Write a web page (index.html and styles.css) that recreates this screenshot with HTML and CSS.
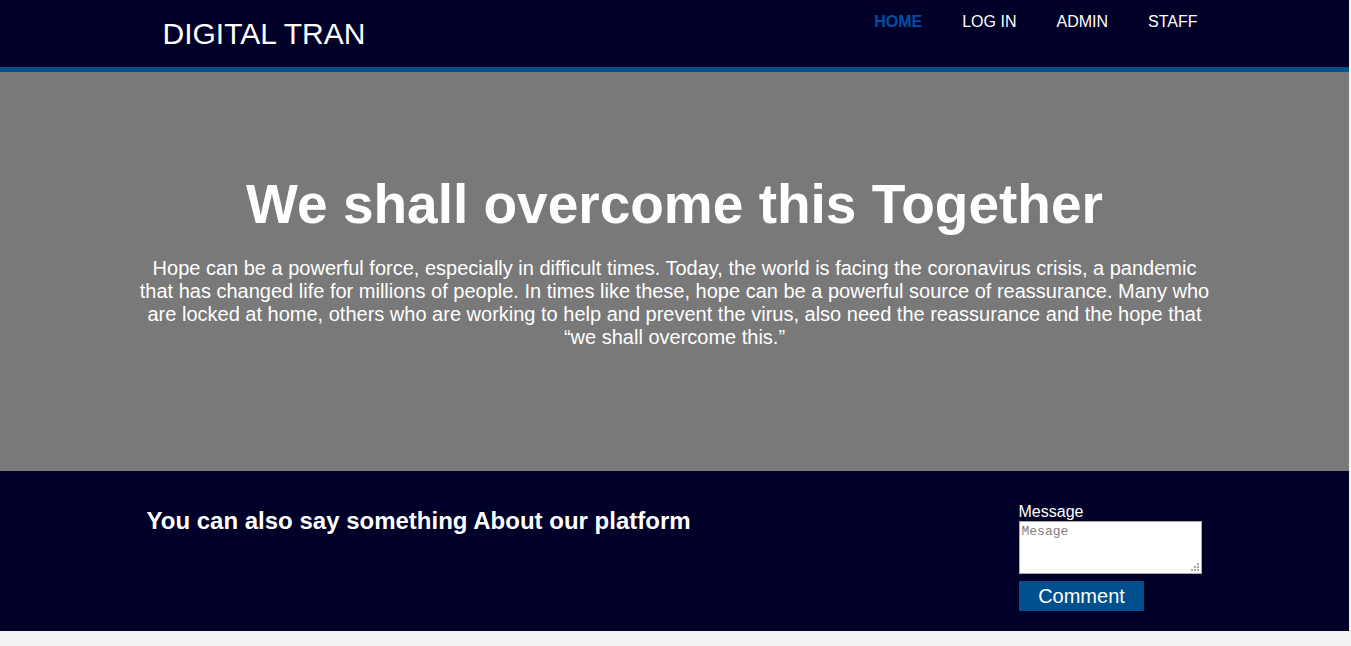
FILE: index.html
```html
<!DOCTYPE html>
<html lang="en">
<head>
<meta charset="utf-8">
<title>Digital Tran</title>
<link rel="stylesheet" href="styles.css">
</head>
<body>
<div class="page">
  <header class="topbar">
    <div class="container topbar-inner">
      <div class="brand">DIGITAL TRAN</div>
      <nav>
        <ul class="nav">
          <li><a class="nav-link active" href="#">HOME</a></li>
          <li><a class="nav-link" href="#">LOG IN</a></li>
          <li><a class="nav-link" href="#">ADMIN</a></li>
          <li><a class="nav-link" href="#">STAFF</a></li>
        </ul>
      </nav>
    </div>
  </header>

  <section class="hero">
    <div class="container hero-inner">
      <h1 class="hero-title">We shall overcome this Together</h1>
      <p class="hero-text">Hope can be a powerful force, especially in difficult times. Today, the world is facing the coronavirus crisis, a pandemic that has changed life for millions of people. In times like these, hope can be a powerful source of reassurance. Many who are locked at home, others who are working to help and prevent the virus, also need the reassurance and the hope that “we shall overcome this.”</p>
    </div>
  </section>

  <footer class="feedback">
    <div class="container feedback-inner">
      <h2 class="feedback-title">You can also say something About our platform</h2>
      <form class="comment-form">
        <label class="comment-label" for="msg">Message</label>
        <div class="input-wrap">
          <textarea id="msg" class="comment-input" placeholder="Mesage"></textarea>
          <svg class="grip" width="8" height="8" viewBox="0 0 8 8" aria-hidden="true">
            <rect x="6" y="0" width="2" height="2" fill="#a6a6a6"/>
            <rect x="3" y="3" width="2" height="2" fill="#a6a6a6"/>
            <rect x="6" y="3" width="2" height="2" fill="#a6a6a6"/>
            <rect x="0" y="6" width="2" height="2" fill="#a6a6a6"/>
            <rect x="3" y="6" width="2" height="2" fill="#a6a6a6"/>
            <rect x="6" y="6" width="2" height="2" fill="#a6a6a6"/>
          </svg>
        </div>
        <button type="button" class="comment-btn">Comment</button>
      </form>
    </div>
  </footer>
</div>
</body>
</html>
```

FILE: styles.css
```css
* { box-sizing: border-box; }

html, body {
  margin: 0;
  padding: 0;
}

body {
  background: #f2f2f2;
  font-family: "Liberation Sans", Arial, sans-serif;
  color: #fff;
}

.page {
  margin-right: 2px;
}

.container {
  width: 1080px;
  margin: 0 auto;
}

/* Top bar */
.topbar {
  background: #000028;
  border-bottom: 5px solid #005190;
  height: 72px;
}

.topbar-inner {
  display: flex;
  justify-content: space-between;
  align-items: flex-start;
}

.brand {
  font-size: 30px;
  line-height: 34px;
  margin-top: 17px;
  padding-left: 28px;
  color: #fff;
}

.nav {
  list-style: none;
  margin: 0 -3px 0 0;
  padding: 13px 0 0 0;
  display: flex;
}

.nav-link {
  display: block;
  padding: 0 20px;
  font-size: 16px;
  line-height: 18px;
  color: #fff;
  text-decoration: none;
}

.nav-link.active {
  color: #0050a0;
  font-weight: bold;
}

/* Hero */
.hero {
  background: #797979;
  height: 399px;
  padding-top: 101px;
}

.hero-inner {
  text-align: center;
}

.hero-title {
  margin: 0;
  font-size: 55px;
  line-height: 63px;
  font-weight: bold;
  color: #fff;
}

.hero-text {
  margin: 21px 0 0 0;
  font-size: 20px;
  line-height: 23px;
  color: #fff;
}

/* Feedback */
.feedback {
  background: #000028;
  height: 160px;
  padding-top: 32px;
}

.feedback-inner {
  display: flex;
  justify-content: space-between;
  align-items: flex-start;
  padding: 0 13px 0 12px;
}

.feedback-title {
  margin: 4px 0 0 0;
  font-size: 24px;
  line-height: 28px;
  font-weight: bold;
  color: #fff;
}

.comment-form {
  width: 183px;
  display: flex;
  flex-direction: column;
  align-items: flex-start;
}

.comment-label {
  font-size: 16px;
  line-height: 17px;
  color: #fff;
}

.input-wrap {
  position: relative;
  margin-top: 1px;
}

.comment-input {
  display: block;
  width: 183px;
  height: 53px;
  margin: 0;
  padding: 2px;
  border: 1px solid #a9a9a9;
  background: #fff;
  font-family: "Liberation Mono", "Courier New", monospace;
  font-size: 13px;
  color: #333;
  resize: none;
}

.comment-input::placeholder {
  color: #808080;
}

.grip {
  position: absolute;
  right: 3px;
  bottom: 3px;
  display: block;
}

.comment-btn {
  margin-top: 7px;
  width: 125px;
  height: 30px;
  border: none;
  background: #00508f;
  color: #fff;
  font-family: "Liberation Sans", Arial, sans-serif;
  font-size: 20px;
  line-height: 30px;
  padding: 0 0 0 1px;
  cursor: pointer;
}
```
